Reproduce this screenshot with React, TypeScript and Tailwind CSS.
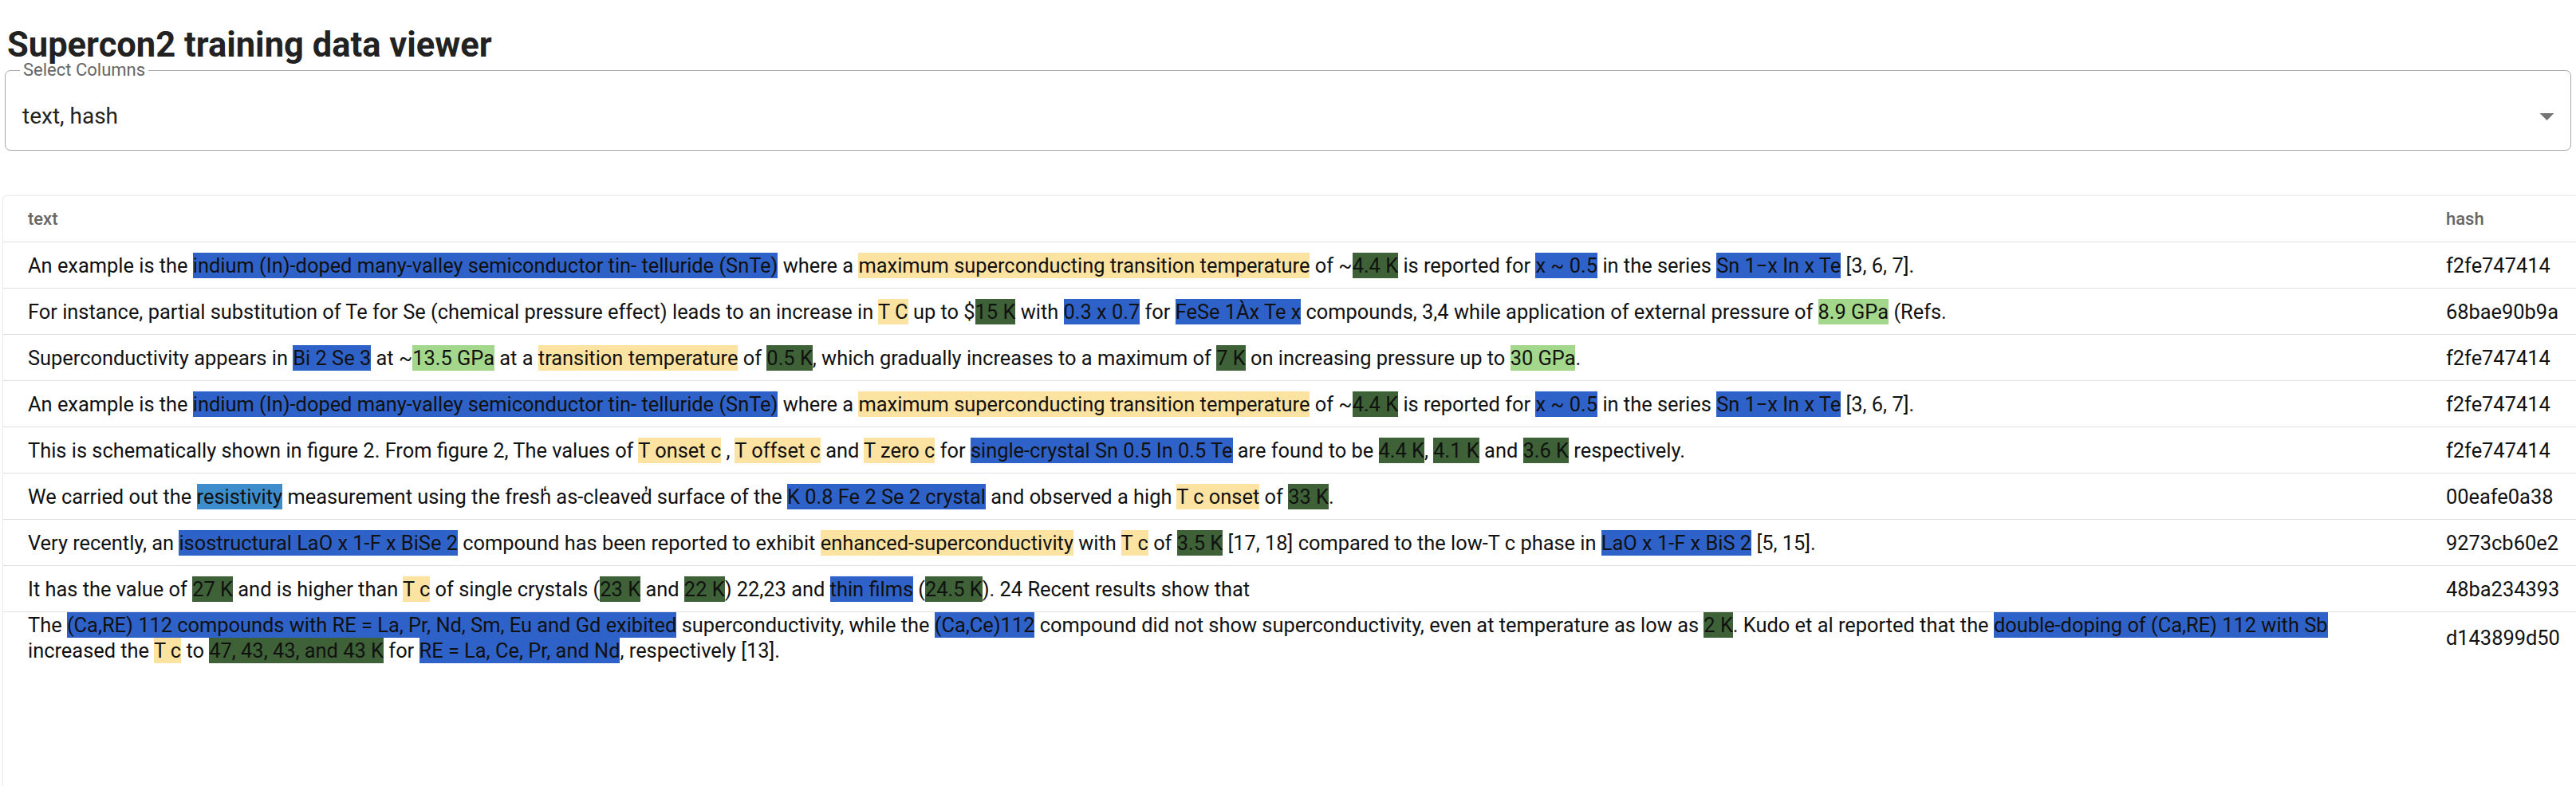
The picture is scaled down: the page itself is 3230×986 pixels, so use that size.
import React from 'react';

type Seg = string | [string, 'b' | 'y' | 'g' | 'l' | 'c'];

const tagClass: Record<string, string> = {
  b: 'bg-[#2f62c9]',
  y: 'bg-[#fce3a1]',
  g: 'bg-[#3e6137]',
  l: 'bg-[#a3d78b]',
  c: 'bg-[#3d8dcc]',
};

const snte: Seg[] = [
  'An example is the ',
  ['indium (In)-doped many-valley semiconductor tin- telluride (SnTe)', 'b'],
  ' where a ',
  ['maximum superconducting transition temperature', 'y'],
  ' of ~',
  ['4.4 K', 'g'],
  ' is reported for ',
  ['x ~ 0.5', 'b'],
  ' in the series ',
  ['Sn 1−x In x Te', 'b'],
  ' [3, 6, 7].',
];

const rows: { text: Seg[]; hash: string }[] = [
  { text: snte, hash: 'f2fe747414' },
  {
    text: [
      'For instance, partial substitution of Te for Se (chemical pressure effect) leads to an increase in ',
      ['T C', 'y'],
      ' up to $',
      ['15 K', 'g'],
      ' with ',
      ['0.3 x 0.7', 'b'],
      ' for ',
      ['FeSe 1Àx Te x', 'b'],
      ' compounds, 3,4 while application of external pressure of ',
      ['8.9 GPa', 'l'],
      ' (Refs.',
    ],
    hash: '68bae90b9a',
  },
  {
    text: [
      'Superconductivity appears in ',
      ['Bi 2 Se 3', 'b'],
      ' at ~',
      ['13.5 GPa', 'l'],
      ' at a ',
      ['transition temperature', 'y'],
      ' of ',
      ['0.5 K', 'g'],
      ', which gradually increases to a maximum of ',
      ['7 K', 'g'],
      ' on increasing pressure up to ',
      ['30 GPa', 'l'],
      '.',
    ],
    hash: 'f2fe747414',
  },
  { text: snte, hash: 'f2fe747414' },
  {
    text: [
      'This is schematically shown in figure 2. From figure 2, The values of ',
      ['T onset c', 'y'],
      ' , ',
      ['T offset c', 'y'],
      ' and ',
      ['T zero c', 'y'],
      ' for ',
      ['single-crystal Sn 0.5 In 0.5 Te', 'b'],
      ' are found to be ',
      ['4.4 K', 'g'],
      ', ',
      ['4.1 K', 'g'],
      ' and ',
      ['3.6 K', 'g'],
      ' respectively.',
    ],
    hash: 'f2fe747414',
  },
  {
    text: [
      'We carried out the ',
      ['resistivity', 'c'],
      ' measurement using the fresh\u0312 as-cleaved\u0313 surface of the ',
      ['K 0.8 Fe 2 Se 2 crystal', 'b'],
      ' and observed a high ',
      ['T c onset', 'y'],
      ' of ',
      ['33 K', 'g'],
      '.',
    ],
    hash: '00eafe0a38',
  },
  {
    text: [
      'Very recently, an ',
      ['isostructural LaO x 1-F x BiSe 2', 'b'],
      ' compound has been reported to exhibit ',
      ['enhanced-superconductivity', 'y'],
      ' with ',
      ['T c', 'y'],
      ' of ',
      ['3.5 K', 'g'],
      ' [17, 18] compared to the low-T c phase in ',
      ['LaO x 1-F x BiS 2', 'b'],
      ' [5, 15].',
    ],
    hash: '9273cb60e2',
  },
  {
    text: [
      'It has the value of ',
      ['27 K', 'g'],
      ' and is higher than ',
      ['T c', 'y'],
      ' of single crystals (',
      ['23 K', 'g'],
      ' and ',
      ['22 K', 'g'],
      ') 22,23 and ',
      ['thin films', 'b'],
      ' (',
      ['24.5 K', 'g'],
      '). 24 Recent results show that',
    ],
    hash: '48ba234393',
  },
  {
    text: [
      'The ',
      ['(Ca,RE) 112 compounds with RE = La, Pr, Nd, Sm, Eu and Gd exibited', 'b'],
      ' superconductivity, while the ',
      ['(Ca,Ce)112', 'b'],
      ' compound did not show superconductivity, even at temperature as low as ',
      ['2 K', 'g'],
      '. Kudo et al reported that the ',
      ['double-doping of (Ca,RE) 112 with Sb', 'b'],
      ' increased the ',
      ['T c', 'y'],
      ' to ',
      ['47, 43, 43, and 43 K', 'g'],
      ' for ',
      ['RE = La, Ce, Pr, and Nd', 'b'],
      ', respectively [13].',
    ],
    hash: 'd143899d50',
  },
];

function Highlighted({ segs }: { segs: Seg[] }) {
  return (
    <>
      {segs.map((s, i) =>
        typeof s === 'string' ? (
          <span key={i}>{s}</span>
        ) : (
          <span key={i} className={`${tagClass[s[1]]} py-px`}>
            {s[0]}
          </span>
        )
      )}
    </>
  );
}

export default function App() {
  return (
    <div className="flex h-[986px] flex-col overflow-hidden bg-white font-['Roboto',sans-serif] text-[#111]">
      <h1 className="pl-[9px] pt-[36px] text-[43.5px] font-bold leading-[42px] text-[#222]">
        Supercon2 training data viewer
      </h1>

      <fieldset className="mx-[6px] h-[111px] rounded-[7px] border border-[#a8a8a8] pl-[21px] pr-[8px]">
        <legend className="ml-[-3px] px-[4px] text-[22px] leading-[20px] text-[#666]">
          Select Columns
        </legend>
        <div className="flex items-center justify-between pt-[26px]">
          <span className="text-[28px] leading-[32px] text-[#222]">text, hash</span>
          <svg width="43" height="43" viewBox="0 0 24 24">
            <path d="M7 10l5 5 5-5z" fill="#757575" />
          </svg>
        </div>
      </fieldset>

      <div className="ml-[3px] mt-[56px] flex-1 rounded-tl-[6px] border-l border-t border-[#ececec] shadow-[0_-1px_3px_rgba(0,0,0,0.04)]">
        <div className="flex h-[58px] items-center border-b border-[#e0e0e0] text-[22px] font-medium text-[#666]">
          <div className="flex-1 pl-[31px]">text</div>
          <div className="w-[200px] pl-[37px]">hash</div>
        </div>
        {rows.map((r, i) => (
          <div
            key={i}
            className={`flex min-h-[58px] items-center text-[25.4px] leading-[32px] ${
              i < rows.length - 1 ? 'border-b border-[#e0e0e0]' : ''
            }`}
          >
            <div className="flex-1 pl-[31px]">
              <Highlighted segs={r.text} />
            </div>
            <div className="w-[200px] pl-[37px]">{r.hash}</div>
          </div>
        ))}
      </div>
    </div>
  );
}
